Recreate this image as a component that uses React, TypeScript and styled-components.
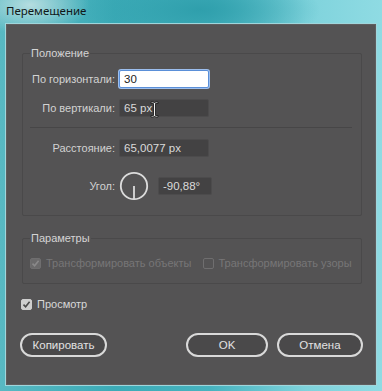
import React from "react";
import styled, { createGlobalStyle } from "styled-components";

const Global = createGlobalStyle`
  html, body { margin: 0; padding: 0; width: 382px; height: 391px; overflow: hidden; }
  body { font-family: "Liberation Sans", Arial, sans-serif; }
`;

const Window = styled.div`
  width: 382px;
  height: 391px;
  box-sizing: border-box;
  display: flex;
  flex-direction: column;
  padding: 0 5px 5px 5px;
  background:
    radial-gradient(ellipse 120px 40px at 200px 10px, #2f9fac 0%, rgba(47,159,172,0) 100%),
    radial-gradient(ellipse 60px 30px at 30px 5px, #b5dde0 0%, rgba(181,221,224,0) 100%),
    linear-gradient(90deg, #58b9c3 0%, #3cabb7 30%, #47b3bf 55%, #7fd3dc 80%, #8fdbe3 100%);
`;

const TitleBar = styled.div`
  height: 23px;
  display: flex;
  align-items: center;
  padding-left: 1px;
  padding-bottom: 3px;
  box-sizing: border-box;
  font-family: "Noto Sans", "Liberation Sans", sans-serif;
  font-size: 11.5px;
  color: #101818;
`;

const Panel = styled.div`
  flex: 1;
  background: #545354;
  border: 1px solid #9fd6dc;
  box-shadow: inset 0 0 0 1px #5f5e5f;
  display: flex;
  flex-direction: column;
  padding: 22px 14px 0 16px;
  color: #d2d2d2;
  font-size: 11px;
`;

const Group = styled.fieldset<{ $pb: number; $pt: number }>`
  margin: 0;
  border: 1px solid #4a494a;
  border-radius: 2px;
  padding: ${(p) => p.$pt}px 0 ${(p) => p.$pb}px 0;
  min-width: 0;
`;

const Legend = styled.legend`
  margin-left: 7px;
  padding: 0 1px;
  line-height: 14px;
  color: #d4d4d4;
`;

const FieldGrid = styled.div`
  display: grid;
  grid-template-columns: 92px 1fr;
  column-gap: 4px;
  align-items: center;
`;

const Label = styled.label`
  text-align: right;
  white-space: nowrap;
`;

const Input = styled.div<{ $w: number; $active?: boolean }>`
  position: relative;
  width: ${(p) => p.$w}px;
  height: 18px;
  box-sizing: border-box;
  padding-left: 4px;
  display: flex;
  align-items: center;
  border-radius: 2px;
  font-size: 11.5px;
  background: ${(p) => (p.$active ? "#ffffff" : "#434243")};
  border: 1px solid ${(p) => (p.$active ? "#5a8fd8" : "#4c4b4c")};
  box-shadow: ${(p) => (p.$active ? "0 0 0 1px #9dbfee" : "none")};
  color: ${(p) => (p.$active ? "#222" : "#dadada")};
`;

const Separator = styled.div`
  grid-column: 1 / -1;
  height: 1px;
  background: #474647;
  margin: 10px 9px 11px 7px;
`;

const RowGap = styled.div<{ $h: number }>`
  grid-column: 1 / -1;
  height: ${(p) => p.$h}px;
`;

const AngleWrap = styled.div`
  display: flex;
  align-items: center;
  gap: 9px;
`;

const Cursor = styled.svg`
  position: absolute;
  left: 30px;
  top: 1px;
`;

const CheckRow = styled.div`
  display: flex;
  align-items: center;
  padding-left: 7px;
  gap: 11px;
`;

const CheckItem = styled.label<{ $disabled?: boolean }>`
  display: flex;
  align-items: center;
  gap: 5px;
  color: ${(p) => (p.$disabled ? "#777677" : "#d8d8d8")};
  white-space: nowrap;
`;

const Box = styled.span<{ $disabled?: boolean; $checked?: boolean }>`
  width: 11px;
  height: 11px;
  box-sizing: border-box;
  border-radius: 2px;
  display: inline-flex;
  align-items: center;
  justify-content: center;
  background: ${(p) =>
    p.$checked ? (p.$disabled ? "#6b6a6b" : "#cfcfcf") : "transparent"};
  border: 1px solid ${(p) => (p.$disabled ? "#6f6e6f" : "#cfcfcf")};
`;

const PreviewRow = styled.div`
  margin-top: 14px;
  margin-left: -1px;
`;

const Buttons = styled.div`
  display: flex;
  align-items: center;
  margin-top: 23px;
  margin-left: -2px;
  margin-right: -1px;
`;

const Button = styled.button<{ $w: number; $default?: boolean }>`
  width: ${(p) => p.$w}px;
  height: 24px;
  border-radius: 12px;
  background: #4a494a;
  border: ${(p) => (p.$default ? "2.5px" : "2px")} solid #d9d9d9;
  color: #e2e2e2;
  font-family: "Liberation Sans", Arial, sans-serif;
  font-size: 11.5px;
  padding: 0;
`;

const Spacer = styled.div`
  flex: 1;
`;

const GroupGap = styled.div`
  height: 15px;
  flex: none;
`;

const ButtonGap = styled.div`
  width: 9px;
  flex: none;
`;

const Check = ({ color }: { color: string }) => (
  <svg width="9" height="9" viewBox="0 0 9 9">
    <path d="M1.5 4.6 L3.6 6.7 L7.6 1.8" fill="none" stroke={color} strokeWidth="1.6" />
  </svg>
);

export default function App() {
  return (
    <>
      <Global />
      <Window>
        <TitleBar>Перемещение</TitleBar>
        <Panel>
          <Group $pt={10} $pb={14}>
            <Legend>Положение</Legend>
            <FieldGrid>
              <Label>По горизонтали:</Label>
              <Input $w={90} $active>30</Input>
              <RowGap $h={11} />
              <Label>По вертикали:</Label>
              <Input $w={90}>
                65 px
                <Cursor width="9" height="17" viewBox="0 0 9 17">
                  <path
                    d="M1 1 H3.5 L4.5 2 L5.5 1 H8 V2.5 H5.5 V14.5 H8 V16 H5.5 L4.5 15 L3.5 16 H1 V14.5 H3.5 V2.5 H1 Z"
                    fill="#f2f2f2"
                    stroke="#1e1e1e"
                    strokeWidth="0.9"
                  />
                </Cursor>
              </Input>
              <Separator />
              <Label>Расстояние:</Label>
              <Input $w={90}>65,0077 px</Input>
              <RowGap $h={14} />
              <Label>Угол:</Label>
              <AngleWrap>
                <svg width="30" height="30" viewBox="0 0 30 30">
                  <circle cx="15" cy="15" r="13.2" fill="none" stroke="#dcdcdc" strokeWidth="1.8" />
                  <line x1="15" y1="15" x2="15" y2="28" stroke="#dcdcdc" strokeWidth="1.8" />
                </svg>
                <Input $w={54}>-90,88°</Input>
              </AngleWrap>
            </FieldGrid>
          </Group>
          <GroupGap />
          <Group $pt={12} $pb={14}>
            <Legend>Параметры</Legend>
            <CheckRow>
              <CheckItem $disabled>
                <Box $disabled $checked>
                  <Check color="#8a898a" />
                </Box>
                Трансформировать объекты
              </CheckItem>
              <CheckItem $disabled>
                <Box $disabled />
                Трансформировать узоры
              </CheckItem>
            </CheckRow>
          </Group>
          <PreviewRow>
            <CheckItem>
              <Box $checked>
                <Check color="#4a4a4a" />
              </Box>
              Просмотр
            </CheckItem>
          </PreviewRow>
          <Buttons>
            <Button $w={87}>Копировать</Button>
            <Spacer />
            <Button $w={82} $default>
              OK
            </Button>
            <ButtonGap />
            <Button $w={86}>Отмена</Button>
          </Buttons>
        </Panel>
      </Window>
    </>
  );
}
